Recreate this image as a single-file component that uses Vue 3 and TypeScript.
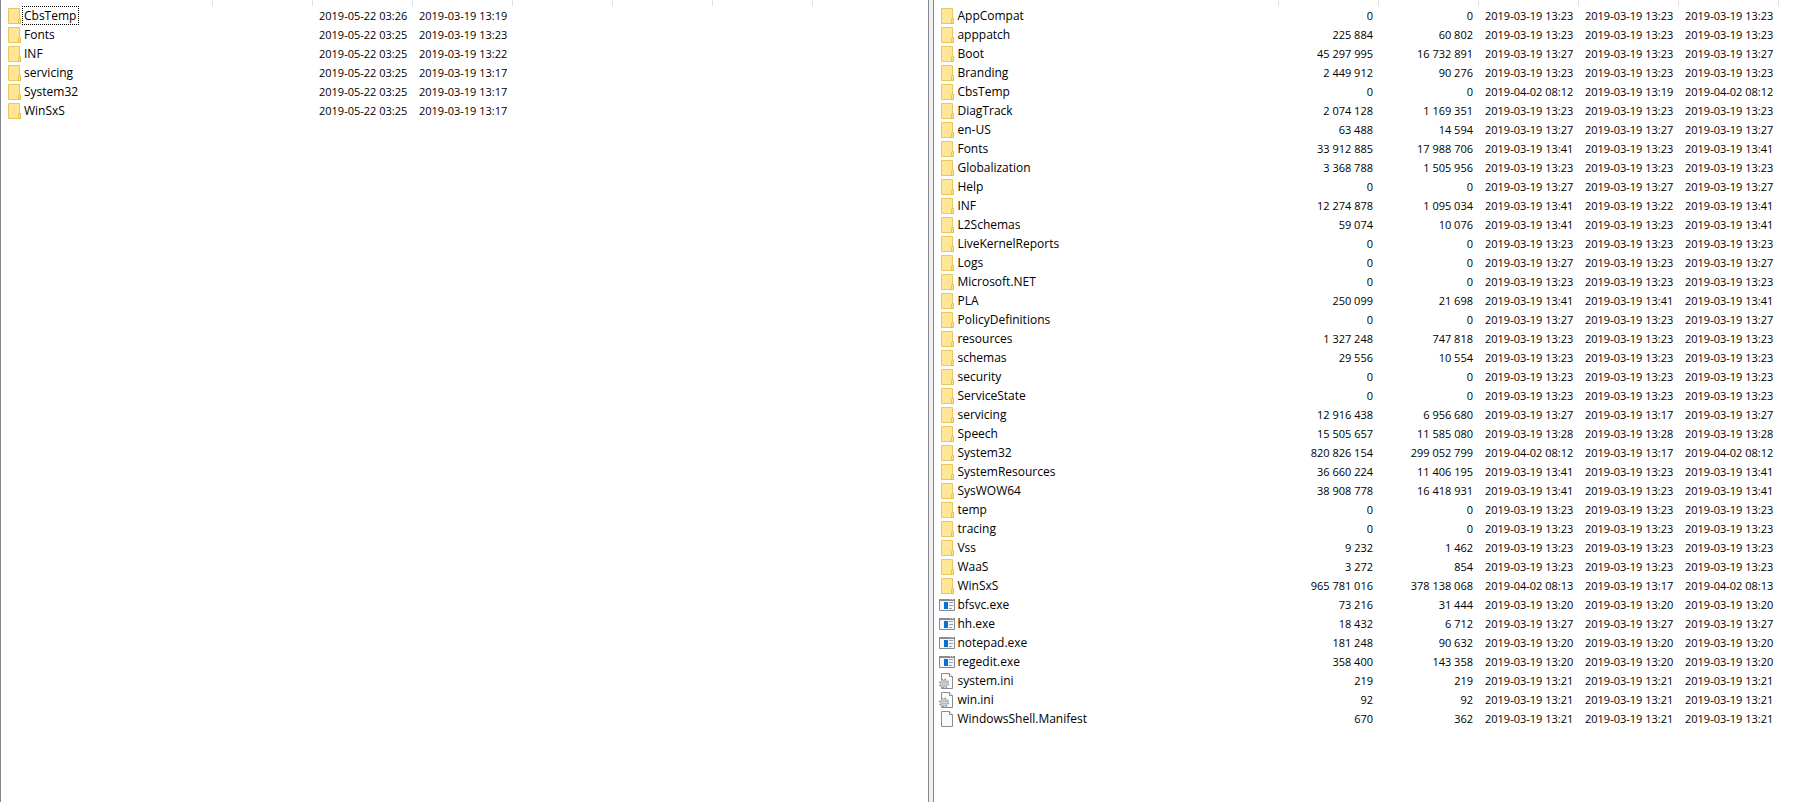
<script setup lang="ts">
type Kind = 'folder' | 'exe' | 'ini' | 'file'

interface Entry {
  name: string
  kind: Kind
  size: string
  packed: string
  dates: string[]
}

const leftColumns = ['Name', 'Size', 'Modified', 'Created', 'Accessed', 'Attributes', 'Comment', '']
const rightColumns = ['Name', 'Size', 'Packed Size', 'Modified', 'Created', 'Accessed', '']

const mar = (time: string) => `2019-03-19 ${time}`
const apr = (time: string) => `2019-04-02 ${time}`

const leftRows = [
  { name: 'CbsTemp', modified: '2019-05-22 03:26', created: mar('13:19'), focused: true },
  { name: 'Fonts', modified: '2019-05-22 03:25', created: mar('13:23'), focused: false },
  { name: 'INF', modified: '2019-05-22 03:25', created: mar('13:22'), focused: false },
  { name: 'servicing', modified: '2019-05-22 03:25', created: mar('13:17'), focused: false },
  { name: 'System32', modified: '2019-05-22 03:25', created: mar('13:17'), focused: false },
  { name: 'WinSxS', modified: '2019-05-22 03:25', created: mar('13:17'), focused: false },
]

function entry(name: string, size: string, packed: string, modified: string, created: string, kind: Kind = 'folder'): Entry {
  const changed = modified.startsWith('08') ? apr(modified) : mar(modified)
  return { name, kind, size, packed, dates: [changed, mar(created), changed] }
}

const rightRows: Entry[] = [
  entry('AppCompat', '0', '0', '13:23', '13:23'),
  entry('apppatch', '225 884', '60 802', '13:23', '13:23'),
  entry('Boot', '45 297 995', '16 732 891', '13:27', '13:23'),
  entry('Branding', '2 449 912', '90 276', '13:23', '13:23'),
  entry('CbsTemp', '0', '0', '08:12', '13:19'),
  entry('DiagTrack', '2 074 128', '1 169 351', '13:23', '13:23'),
  entry('en-US', '63 488', '14 594', '13:27', '13:27'),
  entry('Fonts', '33 912 885', '17 988 706', '13:41', '13:23'),
  entry('Globalization', '3 368 788', '1 505 956', '13:23', '13:23'),
  entry('Help', '0', '0', '13:27', '13:27'),
  entry('INF', '12 274 878', '1 095 034', '13:41', '13:22'),
  entry('L2Schemas', '59 074', '10 076', '13:41', '13:23'),
  entry('LiveKernelReports', '0', '0', '13:23', '13:23'),
  entry('Logs', '0', '0', '13:27', '13:23'),
  entry('Microsoft.NET', '0', '0', '13:23', '13:23'),
  entry('PLA', '250 099', '21 698', '13:41', '13:41'),
  entry('PolicyDefinitions', '0', '0', '13:27', '13:23'),
  entry('resources', '1 327 248', '747 818', '13:23', '13:23'),
  entry('schemas', '29 556', '10 554', '13:23', '13:23'),
  entry('security', '0', '0', '13:23', '13:23'),
  entry('ServiceState', '0', '0', '13:23', '13:23'),
  entry('servicing', '12 916 438', '6 956 680', '13:27', '13:17'),
  entry('Speech', '15 505 657', '11 585 080', '13:28', '13:28'),
  entry('System32', '820 826 154', '299 052 799', '08:12', '13:17'),
  entry('SystemResources', '36 660 224', '11 406 195', '13:41', '13:23'),
  entry('SysWOW64', '38 908 778', '16 418 931', '13:41', '13:23'),
  entry('temp', '0', '0', '13:23', '13:23'),
  entry('tracing', '0', '0', '13:23', '13:23'),
  entry('Vss', '9 232', '1 462', '13:23', '13:23'),
  entry('WaaS', '3 272', '854', '13:23', '13:23'),
  entry('WinSxS', '965 781 016', '378 138 068', '08:13', '13:17'),
  entry('bfsvc.exe', '73 216', '31 444', '13:20', '13:20', 'exe'),
  entry('hh.exe', '18 432', '6 712', '13:27', '13:27', 'exe'),
  entry('notepad.exe', '181 248', '90 632', '13:20', '13:20', 'exe'),
  entry('regedit.exe', '358 400', '143 358', '13:20', '13:20', 'exe'),
  entry('system.ini', '219', '219', '13:21', '13:21', 'ini'),
  entry('win.ini', '92', '92', '13:21', '13:21', 'ini'),
  entry('WindowsShell.Manifest', '670', '362', '13:21', '13:21', 'file'),
]
</script>

<template>
  <svg class="defs" aria-hidden="true">
    <symbol id="icon-folder" viewBox="0 0 16 16">
      <path d="M2.5.5h11v10h1v5h-12z" fill="#ffe694" stroke="#e6c763" />
      <path d="M12.5 15.5v-4q0-1 1-1t1 1v4z" fill="#ffe27d" stroke="#e3bb3c" stroke-width=".8" />
    </symbol>
    <symbol id="icon-exe" viewBox="0 0 16 16">
      <path d="M.5 2.5h15v11H.5z" fill="#f5f6f7" stroke="#858b90" />
      <path d="M0 2h16v2H0z" fill="#858b90" />
      <path d="M11 2h1v1h-1zM13 2h1v1h-1z" fill="#d9dcde" />
      <path d="M5 5h4v7H5z" fill="#0872d2" />
      <path d="M10 5.5h4M10 8.5h4M10 11.5h3" stroke="#9aa0a5" />
    </symbol>
    <symbol id="icon-file" viewBox="0 0 16 16">
      <path d="M2.5.5h8l3 3v12h-11z" fill="#fafafa" stroke="#8c8c8c" />
      <path d="M10.5.5v3h3" fill="#fff" stroke="#8c8c8c" />
    </symbol>
    <symbol id="icon-ini" viewBox="0 0 16 16">
      <path d="M2.5.5h8l3 3v12h-11z" fill="#fafafa" stroke="#8c8c8c" />
      <path d="M10.5.5v3h3" fill="#fff" stroke="#8c8c8c" />
      <circle cx="5" cy="10.5" r="4.3" fill="#fafafa" stroke="#8b9094" stroke-width="1.4" stroke-dasharray="1.7 1.677" />
      <circle cx="5" cy="10.5" r="3.4" fill="#d5d9dc" stroke="#9a9fa3" stroke-width=".7" />
      <circle cx="5" cy="10.5" r="1.4" fill="#fff" stroke="#8b9094" stroke-width=".8" />
    </symbol>
  </svg>

  <main class="manager">
    <section class="pane pane-left">
      <table>
        <colgroup>
          <col class="col-name" />
          <col v-for="n in 6" :key="n" class="col-data" />
          <col />
        </colgroup>
        <thead>
          <tr>
            <th v-for="(label, i) in leftColumns" :key="i" scope="col" :aria-label="label || undefined"></th>
          </tr>
        </thead>
        <tbody>
          <tr v-for="row in leftRows" :key="row.name">
            <td>
              <div class="item">
                <svg class="icon" aria-hidden="true"><use href="#icon-folder" /></svg>
                <span class="label" :class="{ focused: row.focused }">{{ row.name }}</span>
              </div>
            </td>
            <td></td>
            <td class="data">{{ row.modified }}</td>
            <td class="data">{{ row.created }}</td>
            <td colspan="4"></td>
          </tr>
        </tbody>
      </table>
    </section>
    <div class="splitter" role="separator" aria-orientation="vertical"></div>
    <section class="pane pane-right">
      <table>
        <colgroup>
          <col />
          <col v-for="n in 5" :key="n" class="col-data" />
          <col class="col-rest" />
        </colgroup>
        <thead>
          <tr>
            <th v-for="(label, i) in rightColumns" :key="i" scope="col" :aria-label="label || undefined"></th>
          </tr>
        </thead>
        <tbody>
          <tr v-for="row in rightRows" :key="row.name">
            <td>
              <div class="item">
                <svg class="icon" aria-hidden="true"><use :href="`#icon-${row.kind}`" /></svg>
                <span class="label">{{ row.name }}</span>
              </div>
            </td>
            <td class="data number">{{ row.size }}</td>
            <td class="data number">{{ row.packed }}</td>
            <td v-for="(date, i) in row.dates" :key="i" class="data">{{ date }}</td>
            <td></td>
          </tr>
        </tbody>
      </table>
    </section>
  </main>
</template>

<style>
body {
  margin: 0;
  background: #fff;
}
</style>

<style scoped>
.defs {
  display: block;
  width: 0;
  height: 0;
}
.manager {
  display: flex;
  min-height: 100vh;
  color: #000;
  font-family: 'Open Sans', 'Noto Sans', sans-serif;
  font-size: 12px;
  line-height: 19px;
}
.pane {
  min-width: 0;
  box-sizing: border-box;
  background: #fff;
  border-left: 1px solid #828790;
}
.pane-left {
  flex: 929 1 0;
  border-right: 1px solid #828790;
}
.pane-right {
  flex: 867 1 0;
}
.splitter {
  flex: none;
  width: 4px;
  background: #f0f0f0;
}
table {
  width: 100%;
  table-layout: fixed;
  border-collapse: separate;
  border-spacing: 0;
}
.col-name {
  width: 212px;
}
.col-data {
  width: 100px;
}
.col-rest {
  width: 21px;
}
th {
  height: 6px;
  padding: 0;
  line-height: 0;
  border-right: 1px solid #e0e0e0;
}
th:last-child {
  border-right: 0;
}
td {
  height: 19px;
  padding: 0;
  white-space: nowrap;
}
.item {
  display: flex;
  align-items: center;
  height: 19px;
  padding-left: 5px;
}
.icon {
  flex: none;
  width: 16px;
  height: 16px;
}
.label {
  padding: 0 2px 0 1px;
  line-height: 17px;
  border: 1px solid transparent;
}
.label.focused {
  border: 1px dotted #000;
}
.data {
  padding: 0 6px;
  font-size: 11px;
}
.number {
  text-align: right;
}
</style>
